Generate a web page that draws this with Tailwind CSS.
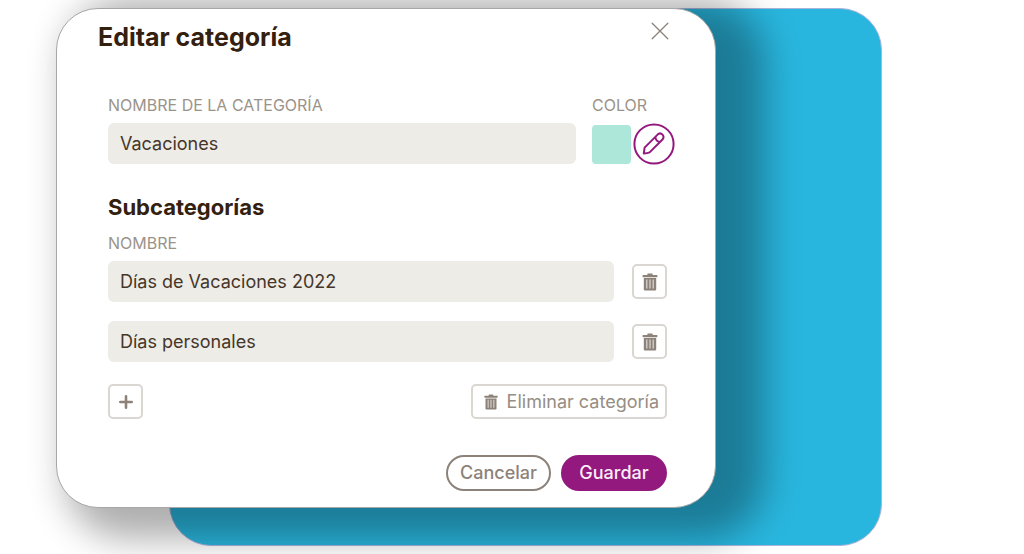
<!DOCTYPE html>
<html lang="es">
<head>
<meta charset="utf-8">
<meta name="viewport" content="width=device-width, initial-scale=1">
<title>Editar categoría</title>
<script src="https://cdn.jsdelivr.net/npm/@tailwindcss/browser@4"></script>
</head>
<body class="min-h-screen overflow-x-hidden bg-white font-['Inter',sans-serif] text-[#33200f]">
<svg class="hidden" aria-hidden="true">
  <symbol id="trash" viewBox="0 0 16 18">
    <path d="M1.8 5h12.4v11.2c0 .8-.5 1.3-1.3 1.3H3.1c-.8 0-1.3-.5-1.3-1.3z" fill="#8c8279"/>
    <rect x=".6" y="2" width="14.8" height="2.2" rx=".5" fill="#8c8279"/>
    <rect x="5.3" y="0.6" width="5.4" height="2" rx=".8" fill="#8c8279"/>
    <path d="M4.8 6.5v9M8 6.5v9M11.2 6.5v9" stroke="#dcd7d2" stroke-width="1.2"/>
  </symbol>
</svg>
<main class="grid pt-2 pr-[142px] pb-2 pl-14">
  <div class="col-start-1 row-start-1 ml-[113px] rounded-[42px] border border-[#a9b4dc] bg-[#29b6de]"></div>
  <section role="dialog" aria-labelledby="title" class="relative col-start-1 row-start-1 mr-[166px] mb-[38px] rounded-[42px] border border-[#a9a7a5] bg-white pt-3 pr-12 pb-4 pl-[51px] shadow-[29px_11px_36px_20px_rgba(0,0,0,0.32)]">
    <header class="-mr-1 -ml-2.5 flex items-start justify-between">
      <h1 id="title" class="text-[25px] leading-8 font-bold">Editar categoría</h1>
      <button type="button" aria-label="Cerrar" class="px-0.5 py-px">
        <svg class="size-4.5" viewBox="0 0 18 18" fill="none" stroke="#8c8279" stroke-width="1.3" stroke-linecap="round"><path d="M1.2 1.2l15.6 15.6M16.8 1.2L1.2 16.8"/></svg>
      </button>
    </header>
    <form>
      <div class="mt-10 flex gap-4">
        <div class="flex flex-1 flex-col gap-1.5">
          <label for="name" class="text-base leading-6 text-[#9b9389]">NOMBRE DE LA CATEGORÍA</label>
          <input id="name" type="text" value="Vacaciones" class="h-[41px] w-full rounded-md bg-[#edece6] px-3 text-lg text-[#46362a]">
        </div>
        <div class="-mr-2 flex flex-col gap-1.5">
          <span class="text-base leading-6 text-[#9b9389]">COLOR</span>
          <div class="flex items-center gap-0.5">
            <span class="size-[39px] rounded bg-[#ace7d9]"></span>
            <button type="button" aria-label="Editar color" class="size-[42px] rounded-full">
              <svg class="size-[42px]" viewBox="0 0 42 42" fill="none" stroke="#93197f" stroke-width="2" stroke-linejoin="round"><circle cx="21" cy="21" r="19.6"/><path d="M10.8 30.4l.8-5.8L24.6 11.6c1.4-1.3 3.5-1.4 4.9 0s1.4 3.5 0 4.9L16.6 29.4c-1.8.8-3.8 1-5.8 1zM22.4 14c.2 2.8 2 4.7 4.8 4.9"/></svg>
            </button>
          </div>
        </div>
      </div>
      <h2 class="mt-7 text-[22px] leading-7 font-bold">Subcategorías</h2>
      <div class="mt-2.5 text-base leading-6 text-[#9b9389]">NOMBRE</div>
      <div class="mt-1.5 flex flex-col gap-[19px]">
        <div class="flex items-center gap-4.5">
          <input type="text" aria-label="Nombre de la subcategoría 1" value="Días de Vacaciones 2022" class="h-[41px] min-w-0 flex-1 rounded-md bg-[#edece6] px-3 text-lg text-[#46362a]">
          <button type="button" aria-label="Eliminar subcategoría 1" class="grid size-[35px] place-items-center rounded-[5px] border-2 border-[#dad6d2]"><svg class="h-4.5 w-4"><use href="#trash"/></svg></button>
        </div>
        <div class="flex items-center gap-4.5">
          <input type="text" aria-label="Nombre de la subcategoría 2" value="Días personales" class="h-[41px] min-w-0 flex-1 rounded-md bg-[#edece6] px-3 text-lg text-[#46362a]">
          <button type="button" aria-label="Eliminar subcategoría 2" class="grid size-[35px] place-items-center rounded-[5px] border-2 border-[#dad6d2]"><svg class="h-4.5 w-4"><use href="#trash"/></svg></button>
        </div>
      </div>
      <div class="mt-[22px] flex items-center justify-between">
        <button type="button" aria-label="Añadir subcategoría" class="grid size-[35px] place-items-center rounded-[5px] border-2 border-[#dad6d2]"><svg class="size-3.5" viewBox="0 0 14 14" stroke="#8c8279" stroke-width="2.6" stroke-linecap="round"><path d="M7 1.3v11.4M1.3 7h11.4"/></svg></button>
        <button type="button" class="flex h-[35px] items-center gap-2 rounded-[5px] border-2 border-[#dad6d2] pr-1.5 pl-2.5 text-lg text-[#968d84]"><svg class="h-4 w-4"><use href="#trash"/></svg>Eliminar categoría</button>
      </div>
      <div class="mt-9 flex justify-end gap-2.5">
        <button type="button" class="h-9 w-[105px] rounded-full border-2 border-[#8c8279] text-lg font-medium text-[#8c8279]">Cancelar</button>
        <button type="submit" class="h-9 w-[106px] rounded-full bg-[#93197f] text-lg font-medium text-[#fbeef8]">Guardar</button>
      </div>
    </form>
  </section>
</main>
</body>
</html>
